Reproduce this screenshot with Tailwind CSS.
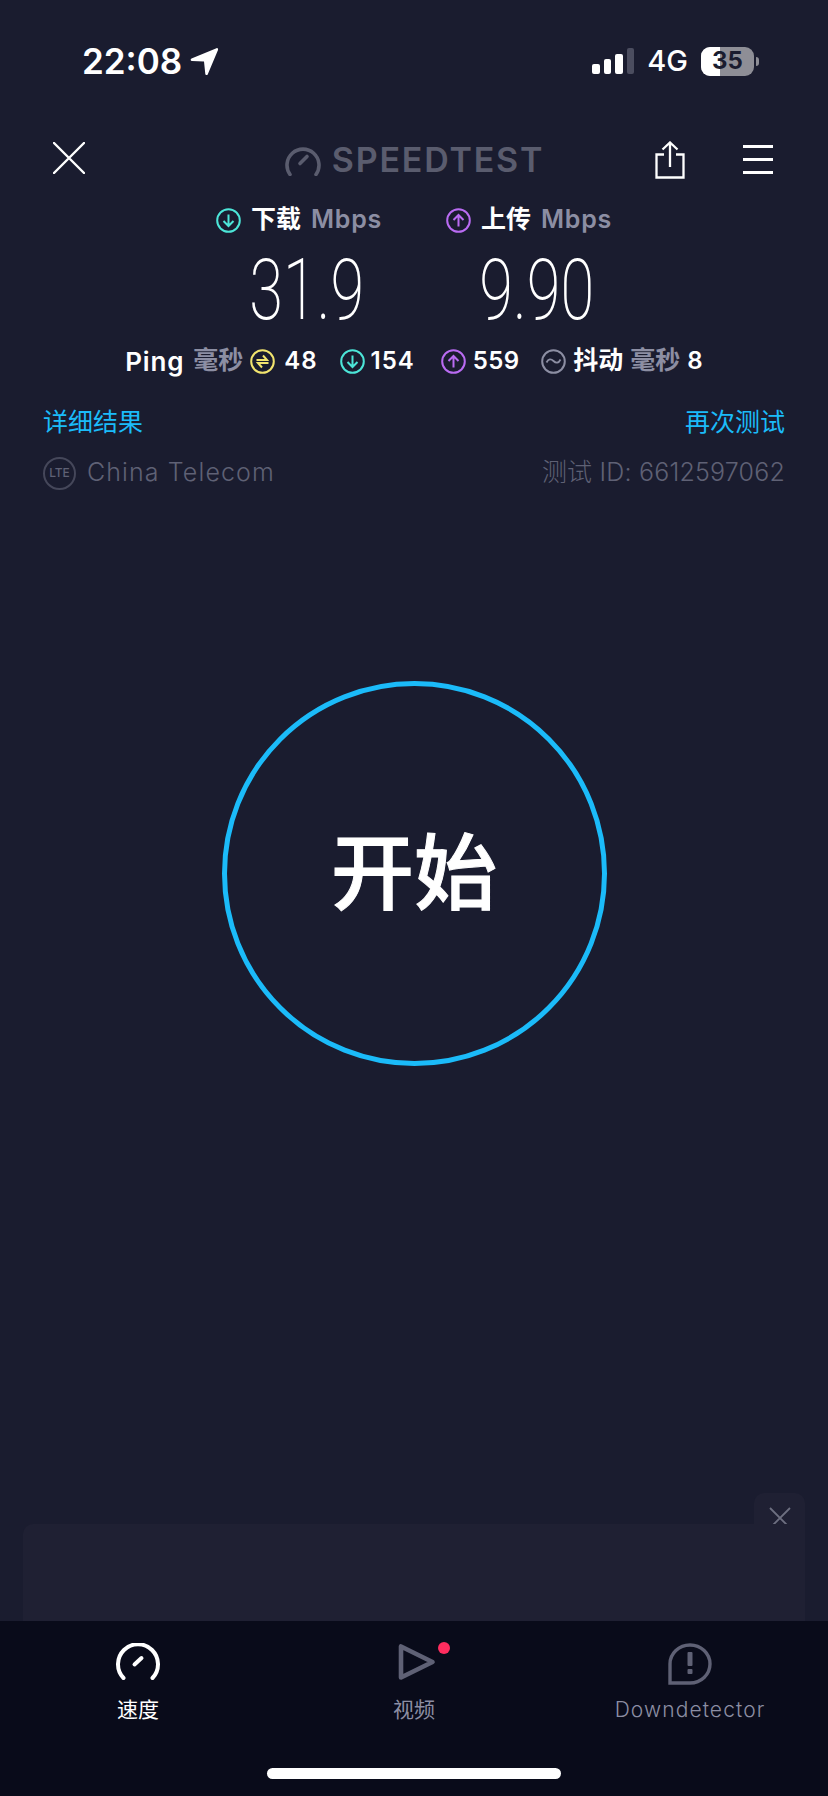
<!DOCTYPE html>
<html lang="zh-CN">
<head>
    <meta charset="UTF-8">
    <title>Speedtest</title>
    <script src="https://cdn.jsdelivr.net/npm/@tailwindcss/browser@4"></script>
</head>
<body class="bg-[#1a1c2f] font-['Inter','Noto_Sans_CJK_SC',sans-serif]">
<div class="w-[828px] h-[1796px] flex flex-col overflow-hidden">

    <!-- Status bar -->
    <div class="h-[122px] shrink-0 flex justify-between pl-[82px] pr-[69px] pt-[42px]">
        <div class="flex items-start gap-[8px] h-[38px]">
            <span class="text-[35px] leading-[38px] font-semibold text-white">22:08</span>
            <svg class="mt-[5px]" width="29" height="29" viewBox="0 0 29 29"><path d="M26.500 1.200 1.500 11.500c-1.400.6-1 2.600.5 2.600l12 .4 1.300 12.500c.2 1.300 1.900 1.500 2.400.4L28 2.900c.4-1.100-.5-2.100-1.500-1.700z" fill="#fff"/></svg>
        </div>
        <div class="flex items-center h-[38px]">
            <div class="flex items-end gap-[4px] h-[26px] mr-[13px]">
                <div class="w-[7.500px] h-[10px] rounded-[2px] bg-white"></div>
                <div class="w-[7.500px] h-[15px] rounded-[2px] bg-white"></div>
                <div class="w-[7.500px] h-[20px] rounded-[2px] bg-white"></div>
                <div class="w-[7.500px] h-[26px] rounded-[2px] bg-[#4b4d5f]"></div>
            </div>
            <span class="text-[29px] leading-[38px] font-medium text-white mr-[13px]">4G</span>
            <div class="flex items-center gap-[2px]">
                <div class="relative w-[53px] h-[29px] rounded-[9px] bg-[#8e8e96] overflow-hidden">
                    <div class="w-[19px] h-full bg-white"></div>
                    <span class="absolute inset-0 flex items-center justify-center text-[24px] font-bold text-[#1a1c2f]">35</span>
                </div>
                <div class="w-[3px] h-[9px] rounded-r-[3px] bg-[#8e8e96]"></div>
            </div>
        </div>
    </div>

    <!-- Header -->
    <div class="h-[75px] shrink-0 flex items-start justify-between pl-[53px] pr-[55px] pt-[20px]">
        <svg width="32" height="32" viewBox="0 0 32 32"><path d="M1 1 31 31M31 1 1 31" stroke="#fff" stroke-width="2.400" stroke-linecap="round"/></svg>
        <div class="flex items-center gap-[11px] h-[32px] mt-[2px] ml-[89px]">
            <svg width="36" height="31" viewBox="0 0 36 31"><path d="M5 29.500A16 16 0 1 1 31 29.500" fill="none" stroke="#5a5c6e" stroke-width="3.600" stroke-linecap="round"/><path d="M15 18.500 22 11.500" stroke="#5a5c6e" stroke-width="3.600" stroke-linecap="round"/></svg>
            <span class="text-[34px] leading-[32px] font-semibold text-[#5a5c6e] tracking-[1.800px]">SPEEDTEST</span>
        </div>
        <div class="flex items-start gap-[58px] -mt-[1px]">
            <svg width="30" height="38" viewBox="0 0 30 38"><path d="M15 26V2M7.500 8.500 15 1.500l7.500 7M9 13.500H1.500v23h27v-23H21" fill="none" stroke="#fff" stroke-width="2.300"/></svg>
            <div class="flex flex-col gap-[10px] w-[30px] pt-[4px]">
                <div class="h-[3px] bg-white"></div>
                <div class="h-[3px] bg-white"></div>
                <div class="h-[3px] bg-white"></div>
            </div>
        </div>
    </div>

    <!-- Download and upload -->
    <div class="shrink-0 flex justify-center gap-[66px]">
        <div class="flex flex-col items-center w-[164px]">
            <div class="flex items-center h-[46px] mb-[2px] whitespace-nowrap">
                <svg width="25" height="25" viewBox="0 0 25 25"><circle cx="12.500" cy="12.500" r="11.300" fill="none" stroke="#4ce5d8" stroke-width="2"/><path d="M12.500 6.500v11.500M7.500 13l5 5 5-5" fill="none" stroke="#4ce5d8" stroke-width="2"/></svg>
                <span class="ml-[10px] text-[25px] font-semibold text-white">下载</span>
                <span class="ml-[10px] text-[25px] font-semibold text-[#8c8ea3] tracking-[0.800px]">Mbps</span>
            </div>
            <div class="h-[90px] ml-[16px] text-[85px] leading-[90px] font-extralight text-white font-['Roboto'] scale-x-[0.72] whitespace-nowrap">31.9</div>
        </div>
        <div class="flex flex-col items-center w-[164px]">
            <div class="flex items-center h-[46px] mb-[2px] whitespace-nowrap">
                <svg width="25" height="25" viewBox="0 0 25 25"><circle cx="12.500" cy="12.500" r="11.300" fill="none" stroke="#b96bf2" stroke-width="2"/><path d="M12.500 7v11.500M7.500 12l5-5 5 5" fill="none" stroke="#b96bf2" stroke-width="2"/></svg>
                <span class="ml-[10px] text-[25px] font-semibold text-white">上传</span>
                <span class="ml-[10px] text-[25px] font-semibold text-[#8c8ea3] tracking-[0.800px]">Mbps</span>
            </div>
            <div class="h-[90px] ml-[16px] text-[85px] leading-[90px] font-extralight text-white font-['Roboto'] scale-x-[0.72] whitespace-nowrap">9.90</div>
        </div>
    </div>

    <!-- Ping and jitter -->
    <div class="h-[44px] mt-[4px] shrink-0 flex items-center justify-center text-[25px] font-semibold text-white whitespace-nowrap">
        <span class="text-[26px] tracking-[0.800px]">Ping</span>
        <span class="ml-[9px] text-[#8c8ea3]">毫秒</span>
        <svg class="ml-[7px]" width="25" height="25" viewBox="0 0 25 25"><circle cx="12.500" cy="12.500" r="11.300" fill="none" stroke="#f2e46e" stroke-width="2"/><path d="M6.500 11h10.500l-4-4.500M18.500 14H8l4 4.500" fill="none" stroke="#f2e46e" stroke-width="2"/></svg>
        <span class="ml-[9px] text-[24px] tracking-[1px]">48</span>
        <svg class="ml-[22px]" width="25" height="25" viewBox="0 0 25 25"><circle cx="12.500" cy="12.500" r="11.300" fill="none" stroke="#4ce5d8" stroke-width="2"/><path d="M12.500 6.500v11.500M7.500 13l5 5 5-5" fill="none" stroke="#4ce5d8" stroke-width="2"/></svg>
        <span class="ml-[6px] text-[24px] tracking-[1px]">154</span>
        <svg class="ml-[26px]" width="25" height="25" viewBox="0 0 25 25"><circle cx="12.500" cy="12.500" r="11.300" fill="none" stroke="#b96bf2" stroke-width="2"/><path d="M12.500 7v11.500M7.500 12l5-5 5 5" fill="none" stroke="#b96bf2" stroke-width="2"/></svg>
        <span class="ml-[7px] text-[24px] tracking-[0.300px]">559</span>
        <svg class="ml-[22px]" width="25" height="25" viewBox="0 0 25 25"><circle cx="12.500" cy="12.500" r="11.300" fill="none" stroke="#8c8ea3" stroke-width="2"/><path d="M5.500 13.500c2-4 4.500-4 7-1.500s5 2.500 7-1.500" fill="none" stroke="#8c8ea3" stroke-width="1.800"/></svg>
        <span class="ml-[7px]">抖动</span>
        <span class="ml-[7px] text-[#8c8ea3]">毫秒</span>
        <span class="ml-[7px] text-[24px]">8</span>
    </div>

    <!-- Links -->
    <div class="h-[40px] mt-[20px] shrink-0 flex items-center justify-between px-[43px] text-[25px] text-[#1bbbf9]">
        <span>详细结果</span>
        <span>再次测试</span>
    </div>

    <!-- Carrier and test id -->
    <div class="h-[40px] mt-[10px] shrink-0 flex items-center justify-between px-[43px] text-[25px] font-light text-[#5f6175]">
        <div class="flex items-center gap-[11px]">
            <div class="w-[33px] h-[33px] rounded-full border-2 border-[#45475a] flex items-center justify-center text-[12px] font-medium">LTE</div>
            <span class="tracking-[1.100px]">China Telecom</span>
        </div>
        <span class="tracking-[0.200px]">测试 ID: 6612597062</span>
    </div>

    <!-- Start button -->
    <div class="flex-1 flex items-start justify-center pt-[188px]">
        <div class="w-[385px] h-[385px] rounded-full border-[5px] border-[#1bbbf9] flex items-center justify-center">
            <span class="text-[83px] font-medium text-white leading-none [-webkit-text-stroke:1px_#fff]">开始</span>
        </div>
    </div>

    <!-- Ad slot -->
    <div class="shrink-0 flex flex-col items-end px-[23px]">
        <div class="w-[51px] h-[31px] rounded-t-[10px] bg-[#1f2033] flex items-start justify-center pt-[14px] overflow-visible">
            <svg class="shrink-0" width="22" height="22" viewBox="0 0 22 22"><path d="M1 1 21 21M21 1 1 21" stroke="#6d6f80" stroke-width="1.800"/></svg>
        </div>
        <div class="w-full h-[97px] rounded-tl-[10px] bg-[#1f2033]"></div>
    </div>

    <!-- Tab bar -->
    <div class="h-[175px] shrink-0 bg-[#090b1a] flex flex-col">
        <div class="flex pt-[22px]">
            <div class="flex flex-col items-center w-[276px]">
                <svg width="44" height="38" viewBox="0 0 44 38"><path d="M7.500 35A20 20 0 1 1 36.500 35" fill="none" stroke="#fff" stroke-width="4" stroke-linecap="round"/><path d="M18.500 21.500 25.500 15" stroke="#fff" stroke-width="4" stroke-linecap="round"/></svg>
                <span class="mt-[14px] text-[21px] leading-[30px] text-white">速度</span>
            </div>
            <div class="relative flex flex-col items-center w-[276px]">
                <svg class="ml-[6px]" width="38" height="38" viewBox="0 0 38 38"><path d="M3 3.500v31L34.500 19z" fill="none" stroke="#5f6175" stroke-width="4.600" stroke-linejoin="round"/></svg>
                <div class="absolute top-[-1px] left-[162px] w-[12px] h-[12px] rounded-full bg-[#ff2d5f]"></div>
                <span class="mt-[14px] text-[21px] leading-[30px] text-[#8c8ea3]">视频</span>
            </div>
            <div class="flex flex-col items-center w-[276px]">
                <svg width="44" height="42" viewBox="0 0 44 42" class="-mb-[4px]"><path d="M2 40V21A20 19 0 1 1 22 40z" fill="none" stroke="#5f6175" stroke-width="3.400"/><rect x="19.500" y="9" width="5" height="14" rx="1" fill="#5f6175"/><rect x="19.500" y="26" width="5" height="5" rx="1" fill="#5f6175"/></svg>
                <span class="mt-[14px] text-[21px] leading-[30px] font-light text-[#8c8ea3] tracking-[1.100px]">Downdetector</span>
            </div>
        </div>
        <div class="mt-[43px] mx-auto w-[294px] h-[11px] rounded-full bg-white"></div>
    </div>
</div>
</body>
</html>
